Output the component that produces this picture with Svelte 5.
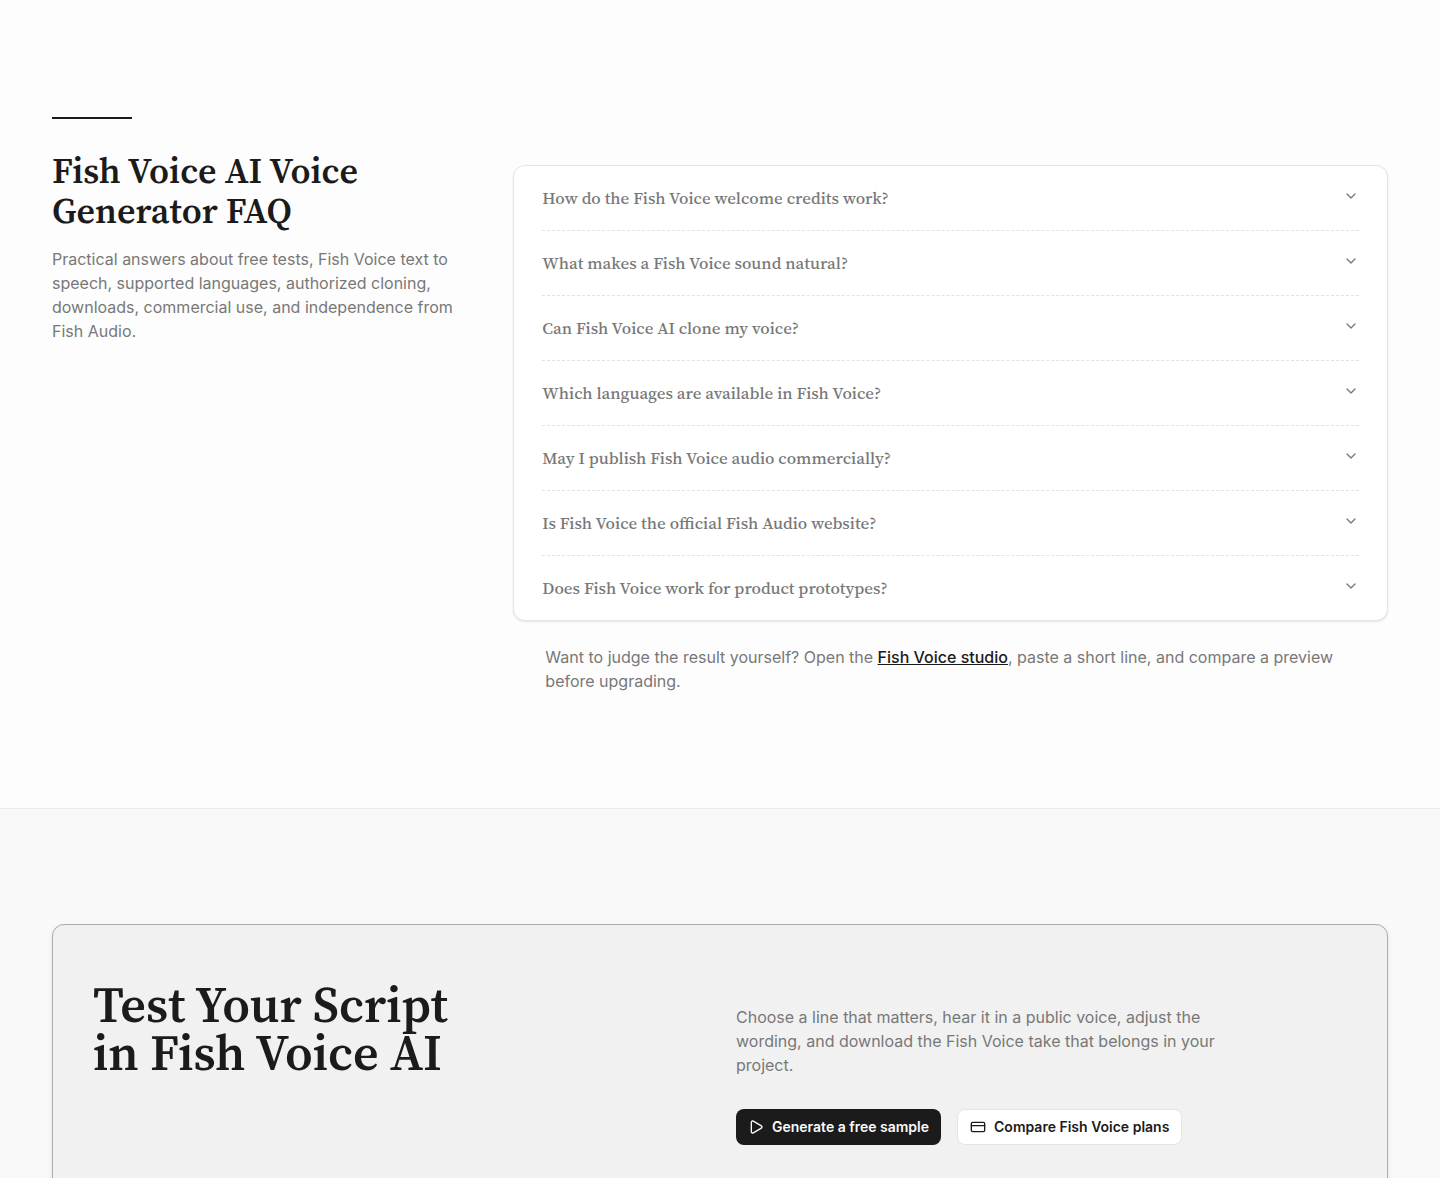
<script>
  const questions = [
    "How do the Fish Voice welcome credits work?",
    "What makes a Fish Voice sound natural?",
    "Can Fish Voice AI clone my voice?",
    "Which languages are available in Fish Voice?",
    "May I publish Fish Voice audio commercially?",
    "Is Fish Voice the official Fish Audio website?",
    "Does Fish Voice work for product prototypes?",
  ];

  let open = $state(-1);

  const toggle = (i) => {
    open = open === i ? -1 : i;
  };
</script>

<section class="faq" id="faq">
  <div class="container faq-grid">
    <div class="intro">
      <h2>Fish Voice AI Voice Generator FAQ</h2>
      <p>
        Practical answers about free tests, Fish Voice text to speech, supported
        languages, authorized cloning, downloads, commercial use, and
        independence from Fish Audio.
      </p>
    </div>

    <div class="answers">
      <div class="list">
        {#each questions as question, i}
          <h3>
            <button
              type="button"
              aria-expanded={open === i}
              onclick={() => toggle(i)}
            >
              {question}
              <svg class="chevron" viewBox="0 0 24 24" aria-hidden="true">
                <path d="m6 9 6 6 6-6" />
              </svg>
            </button>
          </h3>
        {/each}
      </div>

      <p class="hint">
        Want to judge the result yourself? Open the
        <a href="#studio">Fish Voice studio</a>, paste a short line, and compare
        a preview before upgrading.
      </p>
    </div>
  </div>
</section>

<section class="cta" id="studio">
  <div class="container">
    <div class="panel">
      <h2>Test Your Script<br />in Fish Voice AI</h2>

      <div class="pitch">
        <p>
          Choose a line that matters, hear it in a public voice, adjust the
          wording, and download the Fish Voice take that belongs in your
          project.
        </p>
        <div class="actions">
          <a class="btn primary" href="#studio">
            <svg viewBox="0 0 24 24" aria-hidden="true">
              <path
                d="M5 5a2 2 0 0 1 3.008-1.728l11.997 6.998a2 2 0 0 1 .003 3.458l-12 7A2 2 0 0 1 5 19z"
              />
            </svg>
            Generate a free sample
          </a>
          <a class="btn" href="#pricing">
            <svg viewBox="0 0 24 24" aria-hidden="true">
              <rect x="2" y="5" width="20" height="14" rx="2" />
              <path d="M2 10h20" />
            </svg>
            Compare Fish Voice plans
          </a>
        </div>
      </div>
    </div>
  </div>
</section>

<style>
  :global(body) {
    background: #fdfdfd;
    color: #1b1b1b;
    font-family: Inter, "Liberation Sans", sans-serif;
    font-size: 16px;
    line-height: 24px;
  }

  h2,
  h3,
  p {
    margin: 0;
  }

  h2,
  h3 {
    font-family: "Source Serif 4", "Source Serif Pro", "Liberation Serif", serif;
  }

  h2 {
    font-weight: 600;
  }

  p {
    color: #787878;
  }

  svg {
    flex: none;
    width: 16px;
    height: 16px;
    fill: none;
    stroke: currentColor;
    stroke-width: 2;
    stroke-linecap: round;
    stroke-linejoin: round;
  }

  .container {
    max-width: 1336px;
    margin: 0 auto;
  }

  .faq {
    padding: 117px 52px 115px;
  }

  .faq-grid {
    display: grid;
    grid-template-columns: 1fr 2fr;
    gap: 24px;
  }

  .intro::before {
    content: "";
    display: block;
    width: 80px;
    height: 2px;
    margin-bottom: 32px;
    background: #1b1b1b;
  }

  .intro h2 {
    max-width: 384px;
    margin-bottom: 16px;
    font-size: 36px;
    line-height: 40px;
  }

  .intro p {
    max-width: 416px;
  }

  .answers {
    padding-top: 48px;
  }

  .list {
    padding: 0 28px;
    border: 1px solid #e4e4e4;
    border-radius: 12px;
    background: white;
    box-shadow: 0 1px 2px rgb(0 0 0 / 10%);
  }

  h3 {
    font-size: 17px;
    font-weight: 500;
  }

  h3 + h3 {
    border-top: 1px dashed #e2e2e2;
  }

  h3 button {
    display: flex;
    width: 100%;
    justify-content: space-between;
    gap: 16px;
    padding: 20px 0;
    border: 0;
    background: none;
    color: #787878;
    cursor: pointer;
    font: inherit;
    line-height: 24px;
    text-align: left;
  }

  .chevron {
    margin-top: 2px;
    transition: transform 0.2s;
  }

  button[aria-expanded="true"] .chevron {
    transform: rotate(180deg);
  }

  .hint {
    margin-top: 24px;
    padding: 0 32px;
  }

  .hint a {
    color: #1b1b1b;
    font-weight: 500;
  }

  .cta {
    padding: 115px 52px;
    border-top: 1px solid #ebebeb;
    background: #f9f9f9;
  }

  .panel {
    display: grid;
    grid-template-columns: 1fr 1fr;
    gap: 32px;
    padding: 56px 40px;
    border: 1px solid #adadad;
    border-radius: 12px;
    background: #f1f1f1;
    box-shadow: 0 2px 4px rgb(0 0 0 / 10%);
  }

  .panel h2 {
    font-size: 50px;
    line-height: 48px;
  }

  .pitch {
    padding-top: 24px;
  }

  .pitch p {
    max-width: 512px;
  }

  .actions {
    display: flex;
    flex-wrap: wrap;
    gap: 16px;
    margin-top: 32px;
  }

  .btn {
    display: flex;
    align-items: center;
    gap: 8px;
    padding: 7px 12px;
    border: 1px solid #e4e4e4;
    border-radius: 8px;
    background: white;
    color: #1b1b1b;
    font-size: 14px;
    font-weight: 600;
    line-height: 20px;
    text-decoration: none;
  }

  .primary {
    padding: 8px 12px;
    border: 0;
    background: #1b1b1b;
    color: #f9f9f9;
  }
</style>
